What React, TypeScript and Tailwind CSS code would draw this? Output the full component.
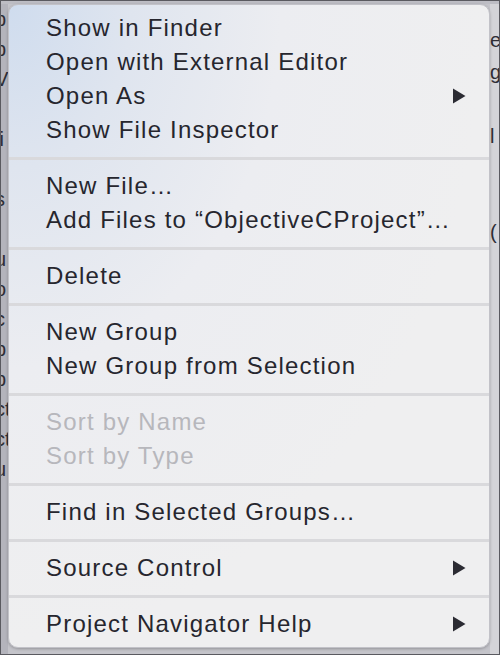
const groups: { label: string; disabled?: boolean; sub?: boolean }[][] = [
  [
    { label: "Show in Finder" },
    { label: "Open with External Editor" },
    { label: "Open As", sub: true },
    { label: "Show File Inspector" },
  ],
  [{ label: "New File…" }, { label: "Add Files to “ObjectiveCProject”…" }],
  [{ label: "Delete" }],
  [{ label: "New Group" }, { label: "New Group from Selection" }],
  [
    { label: "Sort by Name", disabled: true },
    { label: "Sort by Type", disabled: true },
  ],
  [{ label: "Find in Selected Groups…" }],
  [{ label: "Source Control", sub: true }],
  [{ label: "Project Navigator Help", sub: true }],
];

const leftBits = ["p", "p", "V", "", "li", "", "s", "", "u", "o", "c", "p", "p", "ct", "ct", "u", "", "", "", ""];
const rightBits = ["e", "g", "", "l", "", "", "(", "", "", "", "", "", "", "", "", "", "", ""];

function Arrow() {
  return (
    <svg width="14" height="16" viewBox="0 0 14 16" className="shrink-0">
      <path d="M1 0.5 L13.5 8 L1 15.5 Z" fill="#2b2b33" />
    </svg>
  );
}

export default function App() {
  return (
    <div
      className="flex h-[655px] w-[500px] flex-col overflow-hidden border border-[#5a5a60] bg-[#c4c4ca]"
      style={{ fontFamily: '"Liberation Sans", Arial, sans-serif' }}
    >
      <div className="h-[3px] shrink-0 overflow-hidden bg-[#bdbdc4]" />
      <div className="flex min-h-0 flex-1">
        <div className="flex w-[7px] shrink-0 flex-col overflow-hidden bg-[#b4b4bc] text-[20px] leading-[30px] text-[#2e2e36]">
          {leftBits.map((b, i) => (
            <span key={i} className="-ml-[6px] h-[30px] whitespace-nowrap">
              {b}
            </span>
          ))}
        </div>
        <div className="relative mb-[6px] flex-1 overflow-hidden rounded-[10px] border border-[#c2c2c8] bg-[radial-gradient(ellipse_at_top_left,#cfdcee_0%,#dfe5ef_18%,#ecedf1_40%,#efeff0_70%)] pb-[6px] pt-[6px] shadow-[0_1px_3px_rgba(0,0,0,0.25)]">
          {groups.map((g, gi) => (
            <div key={gi}>
              {gi > 0 && (
                <div className="flex h-[22px] items-center">
                  <div className="h-[3px] w-full bg-[#d9d9dc]" />
                </div>
              )}
              {g.map((item) => (
                <div
                  key={item.label}
                  className={`flex h-[34px] items-center justify-between pl-[37px] pr-[23px] text-[24px] tracking-[1.2px] ${
                    item.disabled ? "text-[#b7b7bc]" : "text-[#26262e]"
                  }`}
                >
                  <span className="whitespace-nowrap">{item.label}</span>
                  {item.sub && <Arrow />}
                </div>
              ))}
            </div>
          ))}
        </div>
        <div className="flex w-[9px] shrink-0 flex-col overflow-hidden bg-[#d4d4d8] pt-[20px] text-[20px] leading-[32px] text-[#2e2e36]">
          {rightBits.map((b, i) => (
            <span key={i} className="h-[32px] whitespace-nowrap">
              {b}
            </span>
          ))}
        </div>
      </div>
    </div>
  );
}
